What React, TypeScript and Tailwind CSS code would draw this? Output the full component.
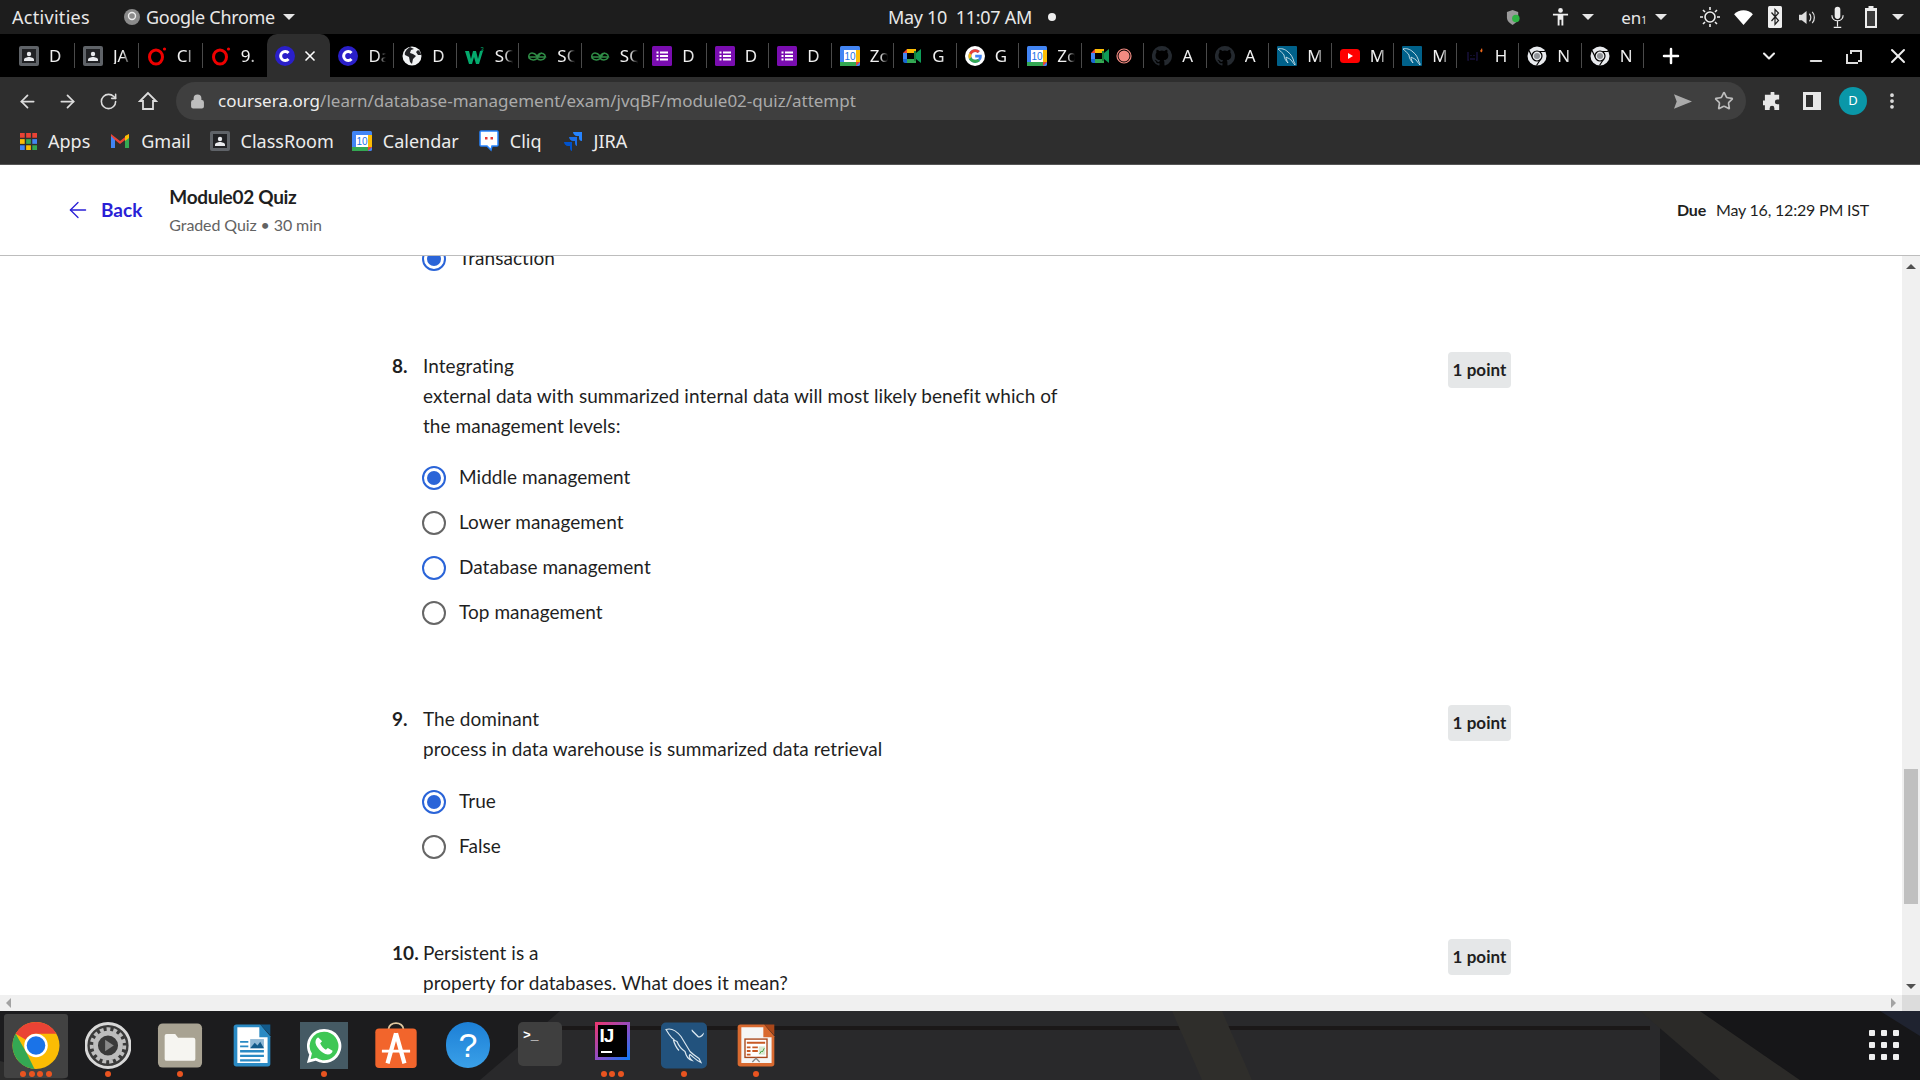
import { ArrowLeft, ArrowRight, ChevronDown, EllipsisVertical, Lock, Minus, Plus, RotateCw, Star, X } from "lucide-react"
import type { ReactNode } from "react"

const uiFont = "font-['Noto_Sans','Liberation_Sans',sans-serif]"
const quizFont = "font-['Lato','Noto_Sans',sans-serif]"

const Classroom = () => (
  <svg viewBox="0 0 20 20" className="w-5 h-5">
    <rect width="20" height="20" rx="2" fill="#5f6368" />
    <rect x="3" y="3" width="14" height="14" fill="#202124" />
    <circle cx="10" cy="8" r="2.2" fill="#e8eaed" />
    <path d="M5 15v-1.5c0-1.5 3-2.5 5-2.5s5 1 5 2.5V15z" fill="#e8eaed" />
  </svg>
)

const Opera = () => (
  <svg viewBox="0 0 20 20" className="w-5 h-5">
    <ellipse cx="9" cy="11" rx="6.5" ry="7" fill="none" stroke="#e00" strokeWidth="3" />
    <circle cx="17.5" cy="3" r="1.6" fill="#e00" />
  </svg>
)

const Coursera = () => (
  <svg viewBox="0 0 20 20" className="w-5 h-5">
    <circle cx="10" cy="10" r="10" fill="#2a1fc9" />
    <path d="M13.5 7a4.5 4.5 0 1 0 0 6" fill="none" stroke="#fff" strokeWidth="3" />
  </svg>
)

const Globe = () => (
  <svg viewBox="0 0 20 20" className="w-5 h-5">
    <circle cx="10" cy="10" r="9.5" fill="#f1f3f4" />
    <path d="M8 1c-3 2-6 5-5 8l4 2 1 5 2 2 1-5 3-3-3-2-3-1 1-3 3-1zM16 4l-2 2 2 3 3 0c0-2-1-4-3-5z" fill="#202124" />
  </svg>
)

const W3 = () => (
  <svg viewBox="0 0 20 20" className="w-5 h-5">
    <path d="M0 5h4l2 8 2-8h3l2 8 2-8h3l-4 13h-3l-2-7-2 7H4z" fill="#04aa6d" />
    <text x="15.5" y="5" fontSize="6" fill="#04aa6d" fontFamily="Liberation Sans">3</text>
  </svg>
)

const Gfg = () => (
  <svg viewBox="0 0 20 20" className="w-5 h-5">
    <path d="M10 11H18.5C18 7 14 6.500 12.500 8.500L10 12.500C8.500 14.500 4 14.500 2 12C1 9 3 7 5 7C7 7 8.500 8 10 10M10 11H1.500M10 10C11.500 8 13 7 15 7M10 12C11.500 14.500 16 14.500 18 12" fill="none" stroke="#2f8d46" strokeWidth="1.5" />
  </svg>
)

const Forms = () => (
  <svg viewBox="0 0 20 20" className="w-5 h-5">
    <rect width="20" height="20" rx="1.500" fill="#7a0db0" />
    <path d="M4.500 5.500h2v2h-2zM8 5.500h8v2H8zM4.500 9h2v2h-2zM8 9h8v2H8zM4.500 12.500h2v2h-2zM8 12.500h8v2H8z" fill="#fff" />
  </svg>
)

const Calendar = () => (
  <svg viewBox="0 0 20 20" className="w-5 h-5">
    <rect width="20" height="20" rx="1.500" fill="#4285f4" />
    <rect x="16" y="4" width="4" height="12" fill="#fbbc04" />
    <rect y="16" width="16" height="4" fill="#34a853" />
    <path d="M16 16h4l-4 4z" fill="#ea4335" />
    <rect x="4" y="4" width="12" height="12" fill="#fff" />
    <text x="10" y="14" textAnchor="middle" fontSize="10" fill="#1a73e8" fontFamily="Liberation Sans">10</text>
  </svg>
)

const Meet = () => (
  <svg viewBox="0 0 20 20" className="w-5 h-5">
    <path d="M5 3h9v4H5v6H1V7z" fill="#ea4335" />
    <path d="M5 3h9v4H5z" fill="#fbbc04" />
    <path d="M1 7h4v6H1z" fill="#4285f4" />
    <path d="M1 13h4v4H3c-1 0-2-1-2-2z" fill="#1967d2" />
    <path d="M5 13h9v4H5z" fill="#34a853" />
    <path d="M14 7v6l5 4V3z" fill="#0f9d58" />
    <path d="M12 5h2v10h-2z" fill="#188038" />
  </svg>
)

const GoogleG = () => (
  <svg viewBox="0 0 20 20" className="w-5 h-5">
    <circle cx="10" cy="10" r="10" fill="#fff" />
    <path d="M10.200 8.700v2.700h3.800c-.3 1.400-1.600 2.400-3.800 2.400a3.900 3.900 0 0 1 0-7.800c1 0 1.900.4 2.600 1l2-2A6.700 6.700 0 0 0 10.200 3.200a6.800 6.800 0 1 0 0 13.600c3.900 0 6.600-2.800 6.600-6.700 0-.5 0-.9-.1-1.400z" fill="#4285f4" />
    <path d="M4.200 7l2.300 1.700c.5-1.500 2-2.700 3.700-2.700 1 0 1.900.4 2.600 1l2-2A6.700 6.700 0 0 0 10.200 3.200 6.800 6.800 0 0 0 4.200 7z" fill="#ea4335" />
    <path d="M4 13l2.400-1.900c.4 1.600 2 2.700 3.800 2.700 1 0 1.800-.2 2.500-.7l2.300 1.800a6.800 6.800 0 0 1-11-1.900z" fill="#34a853" />
    <path d="M3.400 10c0-1.100.3-2.100.8-3l2.300 1.700a4 4 0 0 0-.1 2.400L4 13c-.4-.9-.6-1.900-.6-3z" fill="#fbbc05" />
  </svg>
)

const Github = () => (
  <svg viewBox="0 0 20 20" className="w-5 h-5">
    <path d="M10 0a10 10 0 0 0-3.200 19.500c.5.100.7-.2.700-.5v-1.800c-2.800.6-3.400-1.300-3.400-1.300-.4-1.200-1.100-1.500-1.100-1.500-.9-.6.100-.6.100-.6 1 .1 1.500 1 1.500 1 .9 1.500 2.300 1.100 2.900.8.100-.6.300-1.100.6-1.300-2.200-.3-4.600-1.100-4.600-5 0-1.100.4-2 1-2.700-.1-.3-.4-1.300.1-2.700 0 0 .8-.3 2.800 1a9.500 9.500 0 0 1 5 0c1.900-1.300 2.800-1 2.800-1 .5 1.400.2 2.400.1 2.700.6.700 1 1.600 1 2.700 0 3.900-2.400 4.700-4.600 5 .4.300.7.900.7 1.900V19c0 .3.200.6.700.5A10 10 0 0 0 10 0z" fill="#24292f" />
  </svg>
)

const Dolphin = ({ className }: { className: string }) => (
  <svg viewBox="0 0 20 20" className={className}>
    <rect width="20" height="20" rx="1" fill="#00618a" />
    <path d="M1 3c3-1 7 0 10 3 3 2 5 6 6 10 1 1 1 2 1 3-2-2-3-4-4-5-2-2-4-2-5-3 0 2 1 4 2 6-2-2-4-5-4-8C6 7 3 5 1 3z" fill="none" stroke="#cfe3ec" strokeWidth="0.900" />
  </svg>
)

const Youtube = () => (
  <svg viewBox="0 0 20 20" className="w-5 h-5">
    <rect y="3" width="20" height="14" rx="3.500" fill="#f00" />
    <path d="M8 7l5 3-5 3z" fill="#fff" />
  </svg>
)

const Hacker = () => (
  <svg viewBox="0 0 20 20" className="w-5 h-5">
    <path d="M3 6v8h1M12 6v8h-1M6 9v1M9 9v1M5 13h5" fill="none" stroke="#17103a" strokeWidth="1.500" />
    <path d="M15 5l2-3 .5 3-1 1.500z" fill="#f26a1b" />
  </svg>
)

const Chromium = () => (
  <svg viewBox="0 0 20 20" className="w-5 h-5">
    <circle cx="10" cy="10" r="9.500" fill="#e8eaed" />
    <path d="M10 5.500h8.500M6 12.500L2 4.500M14 12.500L9.500 19.500" stroke="#000" strokeWidth="1.200" />
    <circle cx="10" cy="10" r="5" fill="#e8eaed" stroke="#000" strokeWidth="1.200" />
    <circle cx="10" cy="10" r="3" fill="#8f9296" />
  </svg>
)

const Record = () => (
  <svg viewBox="0 0 16 16" className="w-4 h-4 ml-[6px] shrink-0">
    <circle cx="8" cy="8" r="7" fill="none" stroke="#f28b82" strokeWidth="1.200" />
    <circle cx="8" cy="8" r="5.500" fill="#f28b82" />
  </svg>
)

const mysqlIcon = <Dolphin className="w-5 h-5" />

const tabs: { icon: ReactNode; label: string; active?: boolean; rec?: boolean }[] = [
  { icon: <Classroom />, label: "D" },
  { icon: <Classroom />, label: "JA" },
  { icon: <Opera />, label: "Cl" },
  { icon: <Opera />, label: "9." },
  { icon: <Coursera />, label: "", active: true },
  { icon: <Coursera />, label: "Da" },
  { icon: <Globe />, label: "D" },
  { icon: <W3 />, label: "SQ" },
  { icon: <Gfg />, label: "SQ" },
  { icon: <Gfg />, label: "SQ" },
  { icon: <Forms />, label: "D" },
  { icon: <Forms />, label: "D" },
  { icon: <Forms />, label: "D" },
  { icon: <Calendar />, label: "Zo" },
  { icon: <Meet />, label: "G" },
  { icon: <GoogleG />, label: "G" },
  { icon: <Calendar />, label: "Zo" },
  { icon: <Meet />, label: "", rec: true },
  { icon: <Github />, label: "A" },
  { icon: <Github />, label: "A" },
  { icon: mysqlIcon, label: "M" },
  { icon: <Youtube />, label: "M" },
  { icon: mysqlIcon, label: "M" },
  { icon: <Hacker />, label: "H" },
  { icon: <Chromium />, label: "N" },
  { icon: <Chromium />, label: "N" },
]

const Caret = ({ className = "" }: { className?: string }) => (
  <span className={`inline-block w-0 h-0 border-x-[6px] border-x-transparent border-t-[6px] border-t-[#e6e6e6] ${className}`} />
)

const TopBar = () => (
  <div className={`h-[34px] bg-[#1d1d1d] text-[#e8e8e8] flex items-center relative text-[18px] ${uiFont}`}>
    <span className="ml-3 tracking-[0.3px]">Activities</span>
    <svg viewBox="0 0 16 16" className="w-4 h-4 ml-[34px]">
      <circle cx="8" cy="8" r="8" fill="#8a8a8a" />
      <circle cx="8" cy="7" r="3.500" fill="none" stroke="#eee" strokeWidth="1.400" />
    </svg>
    <span className="ml-[6px] tracking-[-0.3px]">Google Chrome</span>
    <Caret className="ml-2" />
    <div className="absolute left-[888px] top-0 h-full flex items-center gap-[16px] tracking-[-0.3px]">
      <span>May 10&nbsp; 11:07 AM</span>
      <span className="w-2 h-2 rounded-full bg-[#eee]" />
    </div>
    <div className="ml-auto mr-[16px] flex items-center">
      <svg viewBox="0 0 16 18" className="w-[15px] h-[17px]">
        <path d="M7 1l6 2v6c0 4-3 6-6 8-3-2-6-4-6-8V3z" fill="#9a9a9a" />
        <circle cx="10.500" cy="10" r="4" fill="#2fb344" />
      </svg>
      <svg viewBox="0 0 18 20" className="w-[17px] h-5 ml-[31px]" fill="#eee">
        <circle cx="9" cy="3" r="2.500" />
        <path d="M1 6.500h16v2h-5V19H10v-6H8v6H6V8.500H1z" />
      </svg>
      <Caret className="ml-[13px]" />
      <span className="ml-[27px] text-[17px] leading-none">en<span className="text-[10px]">1</span></span>
      <Caret className="ml-[8px]" />
      <svg viewBox="0 0 22 22" className="w-[22px] h-[22px] ml-[32px]" fill="none" stroke="#eee" strokeWidth="1.600">
        <circle cx="11" cy="11" r="5" fill="#1d1d1d" />
        <path d="M11 1v3M11 18v3M1 11h3M18 11h3M4 4l2 2M16 16l2 2M4 18l2-2M16 6l2-2" />
      </svg>
      <svg viewBox="0 0 20 16" className="w-[19px] h-[15px] ml-[13px]"><path d="M0 4.500C5-1 15-1 20 4.500L10 16z" fill="#fff" /></svg>
      <svg viewBox="0 0 14 22" className="w-[14px] h-[24px] ml-[15px]">
        <rect width="14" height="22" rx="1.500" fill="#eee" />
        <path d="M3.500 6.500l7 8-3.500 4v-15l3.500 3.500-7 8" fill="none" stroke="#1d1d1d" strokeWidth="1.200" />
      </svg>
      <svg viewBox="0 0 20 18" className="w-[19px] h-[17px] ml-[16px]">
        <path d="M1 6h3l5-4v14l-5-4H1z" fill="#ddd" />
        <path d="M12 5c2 2 2 6 0 8M15 3c3 3 3 9 0 12" fill="none" stroke="#ddd" strokeWidth="1.300" />
      </svg>
      <svg viewBox="0 0 16 24" className="w-[15px] h-[24px] ml-[13px]">
        <rect x="5" y="1" width="6" height="13" rx="3" fill="#eee" />
        <path d="M2 10c0 8 12 8 12 0M8 16v6M4 23h8" fill="none" stroke="#eee" strokeWidth="1.300" />
      </svg>
      <svg viewBox="0 0 14 22" className="w-[14px] h-[22px] ml-[19px]">
        <path d="M4.500 0h5v2H13v20H1V2h3.500z" fill="#eee" />
        <rect x="3" y="5" width="8" height="15" fill="#3a3a3a" />
      </svg>
      <Caret className="ml-[14px]" />
    </div>
  </div>
)

const TabStrip = () => (
  <div className={`h-[43px] bg-black flex items-stretch pl-[11px] text-white text-[17px] ${uiFont}`}>
    {tabs.map((tab, i) => {
      const beforeActive = tabs[i + 1]?.active
      return (
        <div
          key={i}
          className={`shrink-0 relative flex items-center pl-2 ${i < 6 ? "w-[63.9px]" : "w-[62.5px]"} ${tab.active ? "bg-[#2e2e2e] rounded-t-[10px]" : ""}`}
        >
          <span className="shrink-0 flex">{tab.icon}</span>
          {tab.rec && <Record />}
          {tab.active && <X size={16} strokeWidth={2.5} className="ml-[7px] shrink-0" />}
          {tab.label && (
            <span className="ml-[10px] w-[18px] overflow-hidden whitespace-nowrap leading-none text-[#f1f1f1] [mask-image:linear-gradient(to_right,black_55%,transparent)]">{tab.label}</span>
          )}
          {!tab.active && !beforeActive && <span className="absolute right-0 top-[9px] h-[25px] w-px bg-[#4a4a4a]" />}
        </div>
      )
    })}
    <Plus size={24} strokeWidth={2.5} className="ml-[15px] self-center" />
    <ChevronDown size={20} strokeWidth={2.5} className="ml-[76px] self-center text-[#eee]" />
    <Minus size={18} strokeWidth={2.5} className="ml-[28px] self-center mt-[10px] text-[#ddd]" />
    <div className="ml-[25px] self-center relative w-[12px] h-[12px] border-2 border-[#ddd]">
      <span className="absolute left-[-6px] top-[2px] w-[12px] h-[10px] border-l-2 border-b-2 border-[#ddd] bg-black" />
    </div>
    <X size={24} strokeWidth={2} className="ml-[24px] self-center text-[#eee]" />
  </div>
)

const Toolbar = () => (
  <div className={`h-[43px] pt-[5px] bg-[#2e2e2e] flex items-center text-[#dcdcdc] ${uiFont}`}>
    <ArrowLeft size={21} strokeWidth={2} className="ml-[17px]" />
    <ArrowRight size={21} strokeWidth={2} className="ml-[19px]" />
    <RotateCw size={19} strokeWidth={2} className="ml-[21px]" />
    <svg viewBox="0 0 20 20" className="w-[20px] h-[20px] ml-[20px]" fill="none" stroke="#dcdcdc" strokeWidth="1.800">
      <path d="M10 2L2 10h3v8h10v-8h3z" />
    </svg>
    <div className="ml-[18px] w-[1570px] h-[38px] rounded-full bg-[#3f3f3f] flex items-center pl-[14px] pr-[12px]">
      <Lock size={15} strokeWidth={2.5} className="text-[#bdbdbd]" fill="#bdbdbd" />
      <span className="ml-[13px] text-[17px] tracking-[0px]">
        <span className="text-[#eeeeee]">coursera.org</span>
        <span className="text-[#aaaaaa]">/learn/database-management/exam/jvqBF/module02-quiz/attempt</span>
      </span>
      <svg viewBox="0 0 20 16" className="ml-auto w-[18px] h-[15px] mr-[22px]"><path d="M0 0l20 8L0 16l3-8z" fill="#aaa" /></svg>
      <Star size={20} strokeWidth={2} className="text-[#bdbdbd]" />
    </div>
    <svg viewBox="0 0 20 20" className="w-[19px] h-[19px] ml-[17px]"><path d="M8 1a2 2 0 0 1 4 0v2h5v5h-2a2.500 2.500 0 0 0 0 5h2v6h-5v-2a2.500 2.500 0 0 0-5 0v2H2v-5H0a2.500 2.500 0 0 1 0-5h2V3h6z" fill="#e8e8e8" /></svg>
    <div className="w-[18px] h-[18px] ml-[21px] border-[3px] border-[#e8e8e8] border-r-[8px]" />
    <div className="w-[28px] h-[28px] ml-[18px] rounded-full bg-[#0a97a8] text-white text-[13px] flex items-center justify-center">D</div>
    <EllipsisVertical size={20} strokeWidth={2.5} className="ml-[15px] text-[#e0e0e0]" />
  </div>
)

const JiraIcon = () => (
  <svg viewBox="0 0 20 20" className="w-5 h-5">
    <path d="M19 1H10c0 2 2 4 4 4h2v2c0 2 1 3 3 3z" fill="#2684ff" />
    <path d="M14 6H6c0 2 2 4 4 4h2v2c0 2 1 3 2 3z" fill="#1c6fe8" />
    <path d="M9 11H1c0 2 2 4 4 4h2v2c0 2 1 3 2 3z" fill="#0052cc" />
  </svg>
)

const AppsIcon = () => (
  <svg viewBox="0 0 18 18" className="w-[17px] h-[17px]">
    {["#ea4335", "#ea4335", "#ea4335", "#fbbc05", "#34a853", "#4285f4", "#4285f4", "#fbbc05", "#34a853"].map((c, i) => (
      <rect key={i} x={(i % 3) * 6.5} y={Math.floor(i / 3) * 6.5} width="5" height="5" fill={c} />
    ))}
  </svg>
)

const GmailIcon = () => (
  <svg viewBox="0 0 20 16" className="w-5 h-4">
    <path d="M1 1l9 7 9-7v14h-4V7l-5 4-5-4v8H1z" fill="#ea4335" />
    <path d="M1 3v12h4V7z" fill="#4285f4" />
    <path d="M19 3v12h-4V7z" fill="#34a853" />
    <path d="M15 3l4-2v4l-4 3z" fill="#fbbc04" />
  </svg>
)

const CliqIcon = () => (
  <svg viewBox="0 0 20 22" className="w-5 h-[22px]">
    <path d="M2 1h16a1 1 0 0 1 1 1v13a1 1 0 0 1-1 1h-5l-1 4-4-4H2a1 1 0 0 1-1-1V2a1 1 0 0 1 1-1z" fill="#fff" stroke="#2684ff" strokeWidth="1.500" />
    <rect x="6" y="7" width="2.500" height="2.500" fill="#e53935" />
    <rect x="11.500" y="7" width="2.500" height="2.500" fill="#e53935" />
  </svg>
)

const bookmarks = [
  { icon: <AppsIcon />, label: "Apps", gap: "ml-[20px]" },
  { icon: <GmailIcon />, label: "Gmail", gap: "ml-[20px]" },
  { icon: <Classroom />, label: "ClassRoom", gap: "ml-[19px]" },
  { icon: <Calendar />, label: "Calendar", gap: "ml-[18px]" },
  { icon: <CliqIcon />, label: "Cliq", gap: "ml-[20px]" },
  { icon: <JiraIcon />, label: "JIRA", gap: "ml-[21px]" },
]

const Bookmarks = () => (
  <div className={`h-[45px] pb-[2px] bg-[#2e2e2e] border-b border-[#555] flex items-center text-[#ececec] text-[18px] ${uiFont}`}>
    {bookmarks.map((b) => (
      <div key={b.label} className={`flex items-center gap-[11px] ${b.gap}`}>
        {b.icon}
        <span>{b.label}</span>
      </div>
    ))}
  </div>
)

const Radio = ({ label, checked, focus }: { label: string; checked?: boolean; focus?: boolean }) => (
  <div className="h-[45px] flex items-center gap-[13px]">
    <span
      className={`w-[24px] h-[24px] rounded-full border-[2.5px] flex items-center justify-center shrink-0 ${checked || focus ? "border-[#2a64d8]" : "border-[#666666]"}`}
    >
      {checked && <span className="w-[14px] h-[14px] rounded-full bg-[#2a64d8]" />}
    </span>
    <span>{label}</span>
  </div>
)

const Question = ({ num, lines, options, optionsGap = "mt-[14px]" }: { num: string; lines: string[]; options?: ReactNode; optionsGap?: string }) => (
  <div className="flex w-[1119px]">
    <span className="w-[31px] font-bold shrink-0 leading-[30px]">{num}</span>
    <div className="flex-1">
      {lines.map((l) => (
        <p key={l} className="leading-[30px] h-[30px]">{l}</p>
      ))}
      {options && <div className={`${optionsGap} -ml-[1px]`}>{options}</div>}
    </div>
    <span className="w-[63px] h-[36px] bg-[#e5e7e8] rounded-[4px] text-[17px] font-bold flex items-center justify-center shrink-0 mt-[1px]">1 point</span>
  </div>
)

const QuizHeader = () => (
  <div className={`h-[91px] bg-white border-b border-[#bdbdbd] flex items-center ${quizFont} relative z-10 shrink-0`}>
    <ArrowLeft size={26} strokeWidth={1.2} className="ml-[65px] text-[#2a1fd6]" />
    <span className="ml-[10px] text-[19px] font-bold text-[#2a1fd6]">Back</span>
    <div className="ml-[27px] mt-[2px]">
      <div className="text-[19px] font-bold text-[#1f1f1f] leading-[24px] tracking-[-0.3px]">Module02 Quiz</div>
      <div className="text-[16px] text-[#636363] leading-[24px] mt-[4px] tracking-[-0.1px]">Graded Quiz • 30 min</div>
    </div>
    <div className="ml-auto mr-[51px] text-[16px] text-[#1f1f1f] tracking-[-0.2px]">
      <span className="font-bold">Due</span>
      <span className="ml-[10px]">May 16, 12:29 PM IST</span>
    </div>
  </div>
)

const QuizBody = () => (
  <div className={`flex-1 min-h-0 flex overflow-hidden bg-white text-[#1f1f1f] text-[19px] tracking-[0.05px] ${quizFont}`}>
    <div className="flex-1 min-w-0 overflow-hidden">
      <div className="ml-[392px] -mt-[20px]">
        <div className="ml-[30px]">
          <Radio label="Transaction" checked />
        </div>
        <div className="mt-[70px]">
          <Question
            num="8."
            lines={["Integrating", "external data with summarized internal data will most likely benefit which of", "the management levels:"]}
            options={
              <>
                <Radio label="Middle management" checked />
                <Radio label="Lower management" />
                <Radio label="Database management" focus />
                <Radio label="Top management" />
              </>
            }
          />
        </div>
        <div className="mt-[69px]">
          <Question
            num="9."
            lines={["The dominant", "process in data warehouse is summarized data retrieval"]}
            optionsGap="mt-[15px]"
            options={
              <>
                <Radio label="True" checked />
                <Radio label="False" />
              </>
            }
          />
        </div>
        <div className="mt-[69px]">
          <Question num="10." lines={["Persistent is a", "property for databases. What does it mean?"]} />
        </div>
      </div>
    </div>
    <div className="w-[18px] bg-[#f0f0f0] relative flex justify-center shrink-0">
      <span className="absolute top-[8px] w-0 h-0 border-x-[5px] border-x-transparent border-b-[5px] border-b-[#505050]" />
      <span className="absolute top-[513px] w-[14px] h-[135px] bg-[#c0c0c0]" />
      <span className="absolute bottom-[6px] w-0 h-0 border-x-[5px] border-x-transparent border-t-[5px] border-t-[#505050]" />
    </div>
  </div>
)

const HScroll = () => (
  <div className="h-[16px] bg-[#f0f0f0] flex items-center shrink-0">
    <span className="ml-[6px] w-0 h-0 border-y-[5px] border-y-transparent border-r-[5px] border-r-[#a3a3a3]" />
    <span className="ml-auto mr-[6px] w-0 h-0 border-y-[5px] border-y-transparent border-l-[5px] border-l-[#a3a3a3]" />
    <span className="w-[18px] h-full bg-[#dcdcdc]" />
  </div>
)

const ChromeDock = () => (
  <svg viewBox="0 0 48 48" className="w-full h-full">
    <circle cx="24" cy="24" r="24" fill="#fbbc04" />
    <path d="M24 0a24 24 0 0 1 20.800 12H24a12 12 0 0 0-10.400 6L3.200 12A24 24 0 0 1 24 0z" fill="#ea4335" />
    <path d="M3.200 12l10.400 18 8.900 17.900A24 24 0 0 1 3.200 12z" fill="#34a853" />
    <circle cx="24" cy="24" r="12" fill="#fff" />
    <circle cx="24" cy="24" r="9.500" fill="#1a73e8" />
  </svg>
)

const SettingsDock = () => (
  <svg viewBox="0 0 48 48" className="w-full h-full">
    <circle cx="24" cy="24" r="23" fill="#3a3a3a" stroke="#d8d8d8" strokeWidth="3" />
    <circle cx="24" cy="24" r="13" fill="none" stroke="#bdbdbd" strokeWidth="5" />
    <circle cx="24" cy="24" r="17" fill="none" stroke="#bdbdbd" strokeWidth="4" strokeDasharray="4 3.100" />
    <path d="M21 18l9 6-9 6z" fill="#8a8a8a" />
  </svg>
)

const FilesDock = () => (
  <svg viewBox="0 0 48 48" className="w-full h-full">
    <rect x="1" y="1" width="46" height="46" rx="5" fill="#a8a292" />
    <path d="M8 14a2 2 0 0 1 2-2h9l3 4h16a2 2 0 0 1 2 2v20a2 2 0 0 1-2 2H10a2 2 0 0 1-2-2z" fill="#f6f5f1" />
  </svg>
)

const WriterDock = () => (
  <svg viewBox="0 0 48 48" className="w-full h-full">
    <path d="M7 1h26l11 13v30a3 3 0 0 1-3 3H7a3 3 0 0 1-3-3V4a3 3 0 0 1 3-3z" fill="#2a8ac4" />
    <path d="M8 4h24v11h9v28H8z" fill="#fff" />
    <path d="M33 1h11v12z" fill="#125a8b" />
    <path d="M11 19h9v2h-9zM11 24h9v2h-9zM11 29h26v2.500H11zM11 34h26v2.500H11zM11 39h22v2.500H11z" fill="#2a8ac4" />
    <rect x="22" y="17" width="15" height="10" fill="#8fb8d6" />
    <path d="M22 27l5-6 3 3 3-4 4 7z" fill="#125a8b" />
  </svg>
)

const WhatsappDock = () => (
  <div className="w-full h-full bg-[#455a64] flex items-center justify-center">
    <svg viewBox="0 0 40 40" className="w-[38px] h-[38px]">
      <path d="M20 2a18 18 0 0 0-15.500 27L2 38l9.300-2.400A18 18 0 1 0 20 2z" fill="#fff" />
      <path d="M20 5a15 15 0 0 0-12.700 23L5.800 34l6-1.600A15 15 0 1 0 20 5z" fill="#3ec755" />
      <path d="M14 11c-1 0-3 2-3 5 0 4 6 12 13 13 3 0 5-2 5-4l-5-3-2 2c-2-1-5-4-6-7l2-2z" fill="#fff" />
    </svg>
  </div>
)

const StoreDock = () => (
  <svg viewBox="0 0 48 50" className="w-full h-full">
    <path d="M16 8c0-9 16-9 16 0" fill="none" stroke="#e0c8a0" strokeWidth="2" />
    <rect x="2" y="7" width="44" height="42" rx="4" fill="#f2652c" />
    <path d="M24 12L15 44M24 12L33 44" fill="none" stroke="#fff" strokeWidth="4.500" />
    <path d="M9 31H39" stroke="#fff" strokeWidth="3" />
  </svg>
)

const HelpDock = () => (
  <div className="w-[44px] h-[46px] mx-auto rounded-full bg-[linear-gradient(180deg,#1c7fd6,#3aa0e8)] text-white text-[34px] flex items-center justify-center font-['Liberation_Sans',sans-serif]">?</div>
)

const TerminalDock = () => (
  <div className="w-[44px] h-[44px] mx-auto mt-px rounded-[5px] bg-[#3f3f3f] text-white text-[13px] leading-none pl-[5px] pt-[7px] font-['Liberation_Mono',monospace] font-bold">{">_"}</div>
)

const IdeaDock = () => (
  <div className="w-[35px] h-[38px] mx-auto mt-[3px] bg-[linear-gradient(135deg,#f0356b,#8a4fc9_55%,#087cfa)] p-[3px]">
    <div className="w-full h-full bg-black text-white font-bold text-[19px] leading-[21px] pl-[2px] tracking-[-1px] font-['Liberation_Sans',sans-serif] relative">
      IJ
      <span className="absolute left-[3px] bottom-[4px] w-[11px] h-[2px] bg-white" />
    </div>
  </div>
)

const WorkbenchDock = () => (
  <svg viewBox="0 0 46 46" className="w-full h-full">
    <rect width="46" height="46" rx="5" fill="#22527d" />
    <path d="M5 7c6-2 11 2 15 7 3 5 6 10 9 15 3 3 6 5 9 7l2 4c-5-2-8-6-11-8-1 1-1 3 2 6-4-1-6-5-7-9-3-2-6-5-8-10-3-1-7-5-11-12zM12 16c1 4 2 8 6 12" fill="none" stroke="#dbe7ef" strokeWidth="1.200" />
    <path d="M32 8l6 6 2-1 3-3c0 3-3 5-5 5l-1 0-2-2-4-4c-1-2 0-3 1-1z" fill="#dbe7ef" />
  </svg>
)

const ImpressDock = () => (
  <svg viewBox="0 0 48 48" className="w-full h-full">
    <path d="M7 1h26l11 13v30a3 3 0 0 1-3 3H7a3 3 0 0 1-3-3V4a3 3 0 0 1 3-3z" fill="#d96a30" />
    <path d="M8 4h24v11h9v28H8z" fill="#f5f5f5" />
    <path d="M33 1h11v12z" fill="#a9471a" />
    <rect x="12" y="17" width="24" height="20" fill="#fff" stroke="#a9471a" strokeWidth="1.500" />
    <path d="M14 20h20v2H14zM14 25h4v2h-4zM14 29h4v2h-4zM14 33h4v2h-4zM20 25h6v2h-6zM20 29h6v2h-6z" fill="#c85a24" />
    <rect x="27" y="25" width="7" height="9" fill="#d9e8d0" />
    <path d="M28 33l2-3 1 1 2-4" fill="none" stroke="#3a9d3a" />
    <path d="M20 42l4-4 4 4" fill="none" stroke="#888" strokeWidth="1.500" />
  </svg>
)

const dockApps: { icon: ReactNode; dots: number; active?: boolean; h: string }[] = [
  { icon: <ChromeDock />, dots: 4, active: true, h: "w-[48px]" },
  { icon: <SettingsDock />, dots: 1, h: "w-[46px]" },
  { icon: <FilesDock />, dots: 1, h: "w-[46px]" },
  { icon: <WriterDock />, dots: 0, h: "w-[44px]" },
  { icon: <WhatsappDock />, dots: 1, h: "w-[48px]" },
  { icon: <StoreDock />, dots: 0, h: "w-[46px]" },
  { icon: <HelpDock />, dots: 0, h: "w-[46px]" },
  { icon: <TerminalDock />, dots: 0, h: "w-[46px]" },
  { icon: <IdeaDock />, dots: 3, h: "w-[46px]" },
  { icon: <WorkbenchDock />, dots: 1, h: "w-[46px]" },
  { icon: <ImpressDock />, dots: 1, h: "w-[44px]" },
]

const Dock = () => (
  <div className="h-[69px] relative bg-[#1c1c1e] flex items-stretch overflow-hidden shrink-0">
    <svg viewBox="0 0 1920 69" preserveAspectRatio="none" className="absolute inset-0 w-full h-full">
      <path d="M560 0h1100v69H480z" fill="#29292b" />
      <rect x="560" y="15" width="1090" height="4" fill="#1b1818" />
      <path d="M1172 0h50l30 69h-50z" fill="#2f2e2b" />
      <path d="M1640 0h60l100 69h-80z" fill="#2b2a28" />
      <path d="M1700 0h220v69h-120z" fill="#161618" />
      <path d="M1880 0h40v25z" fill="#1f2330" />
      <path d="M0 50l70 19H0z" fill="#2c2c2c" />
    </svg>
    {dockApps.map((app, i) => (
      <div key={i} className="relative w-[72px] shrink-0">
        {app.active && <span className="absolute inset-x-[4px] top-[3px] bottom-[2px] rounded-[3px] bg-[#424242]" />}
        <div className={`relative ${app.h} h-[47px] mx-auto mt-[11px]`}>{app.icon}</div>
        <div className="absolute bottom-[3px] left-0 right-0 flex justify-center gap-[2.500px]">
          {Array.from({ length: app.dots }).map((_, d) => (
            <span key={d} className="w-[6px] h-[6px] rounded-full bg-[#e95420]" />
          ))}
        </div>
      </div>
    ))}
    <div className="absolute right-[21px] top-[19px] grid grid-cols-3 gap-[6px]">
      {Array.from({ length: 9 }).map((_, i) => (
        <span key={i} className="w-[6px] h-[6px] rounded-[1px] bg-[#eeeeee]" />
      ))}
    </div>
  </div>
)

export default function App() {
  return (
    <div className="w-[1920px] h-[1080px] flex flex-col overflow-hidden bg-white">
      <TopBar />
      <TabStrip />
      <Toolbar />
      <Bookmarks />
      <QuizHeader />
      <QuizBody />
      <HScroll />
      <Dock />
    </div>
  )
}
